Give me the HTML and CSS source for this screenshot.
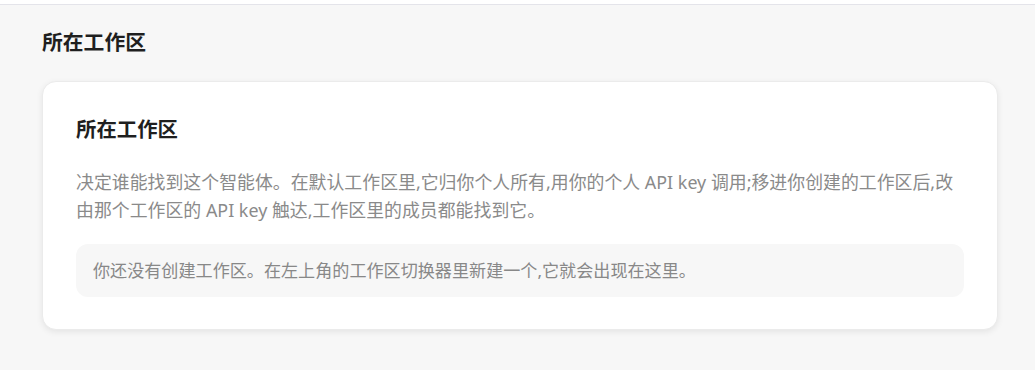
FILE: index.html
```html
<!DOCTYPE html>
<html lang="zh">
<head>
  <meta charset="UTF-8">
  <meta name="viewport" content="width=device-width, initial-scale=1.0">
  <title>所在工作区</title>
  <link rel="stylesheet" href="styles.css">
</head>
<body>
  <div class="topbar"></div>
  <main class="page">
    <h2 class="page-title">所在工作区</h2>
    <section class="card">
      <h3 class="card-title">所在工作区</h3>
      <p class="card-desc">
        决定谁能找到这个智能体。在默认工作区里,它归你个人所有,用你的个人 API key 调用;移进你创建的工作区后,改由那个工作区的 API key 触达,工作区里的成员都能找到它。
      </p>
      <div class="empty-note">你还没有创建工作区。在左上角的工作区切换器里新建一个,它就会出现在这里。</div>
    </section>
  </main>
</body>
</html>
```

FILE: styles.css
```css
body {
  margin: 0;
  background: #f7f7f7;
  font-family: 'Noto Sans', 'Noto Sans CJK SC', sans-serif;
  color: #1f1f1f;
}
.topbar {
  height: 4px;
  background: #fff;
  border-bottom: 1px solid #e4e4ea;
}
.page {
  padding: 23px 37px 40px 42px;
}
.page-title {
  margin: 0 0 25px 0;
  font-size: 20.8px;
  line-height: 28px;
  font-weight: bold;
}
.card {
  background: #fff;
  border: 1px solid #ebebeb;
  border-radius: 14px;
  box-shadow: 0 2px 6px rgba(0, 0, 0, 0.08);
  padding: 33px 33px 32px 33px;
}
.card-title {
  margin: 0 0 25px 0;
  font-size: 20.4px;
  line-height: 28px;
  font-weight: bold;
}
.card-desc {
  margin: 0 0 20px 0;
  font-size: 17.9px;
  line-height: 28px;
  color: #8a8a8a;
}
.empty-note {
  background: #f7f7f7;
  border-radius: 12px;
  padding: 13px 17px;
  font-size: 17.1px;
  line-height: 27px;
  color: #888;
}
```
